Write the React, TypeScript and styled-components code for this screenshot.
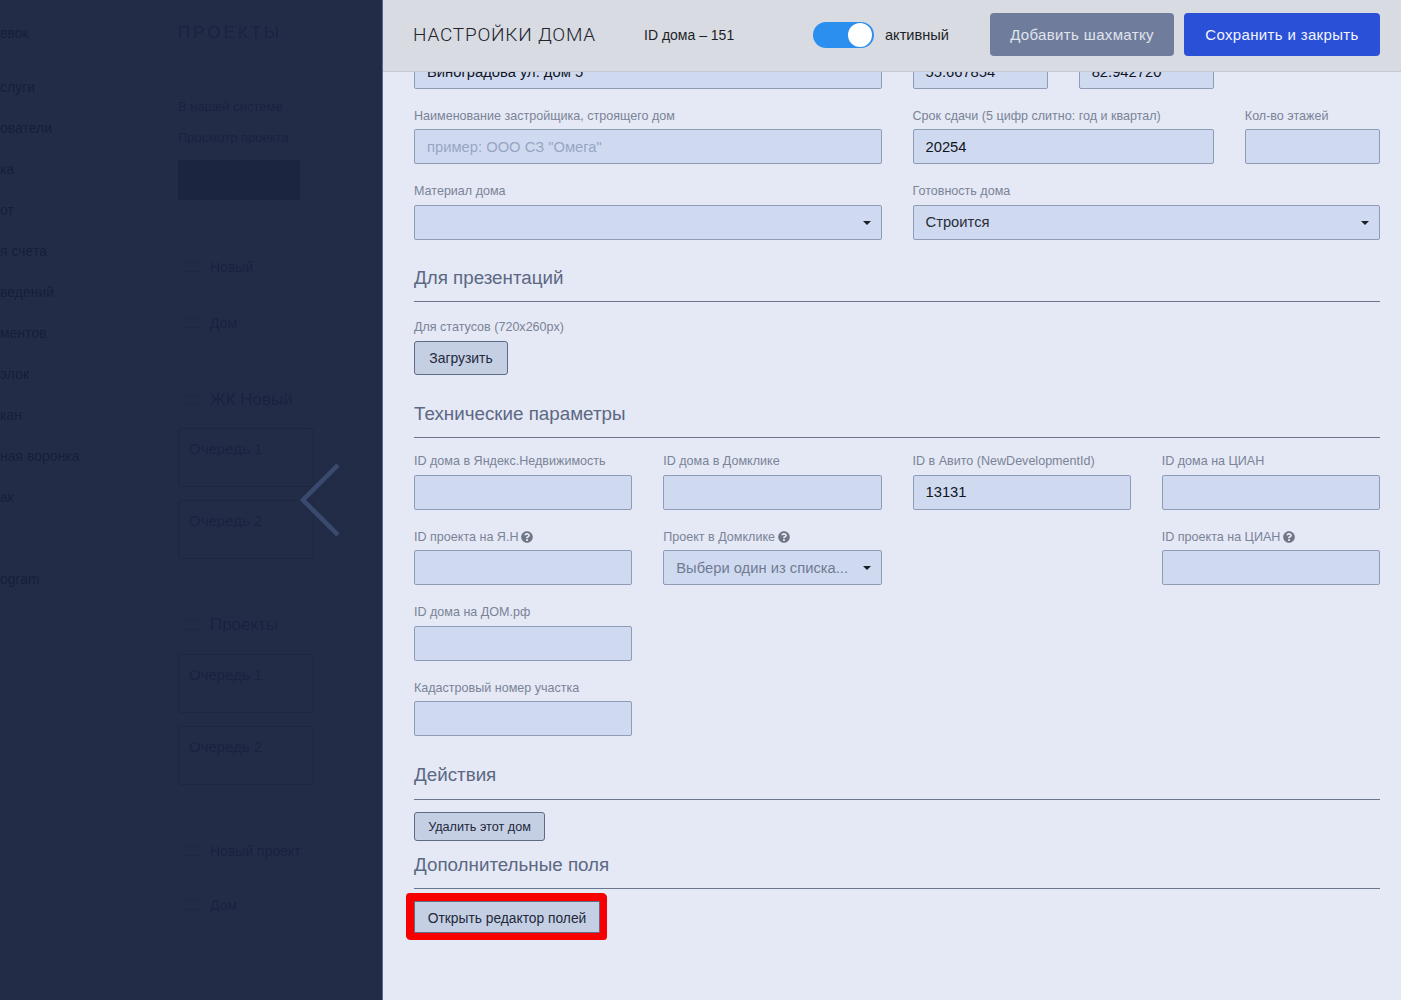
import React from "react";
import styled, { createGlobalStyle } from "styled-components";
import { FaQuestionCircle } from "react-icons/fa";

const Global = createGlobalStyle`
  html, body { margin: 0; padding: 0; height: 100%; overflow: hidden; }
  body { font-family: "Liberation Sans", Arial, sans-serif; background: #e4e9f5; }
  * { box-sizing: border-box; }
`;

const Page = styled.div`
  display: flex;
  width: 100%;
  height: 1000px;
  overflow: hidden;
`;

/* dimmed page behind the panel */
const Backdrop = styled.div`
  position: relative;
  flex: 0 0 383px;
  display: flex;
  height: 100%;
  background: #232c47;
  border-right: 1px solid #5a6a8c;
  overflow: hidden;
`;
const SideMenu = styled.div`
  flex: 0 0 178px;
  padding-top: 25px;
  display: flex;
  flex-direction: column;
  align-items: flex-start;
  filter: blur(0.5px);
`;
const SideItem = styled.div<{ $gap: number }>`
  font-size: 14px;
  line-height: 16px;
  color: #171f36;
  margin-bottom: ${(p) => p.$gap}px;
  white-space: nowrap;
`;
const DimColumn = styled.div`
  flex: 1;
  padding-top: 23px;
  display: flex;
  flex-direction: column;
  align-items: flex-start;
  filter: blur(0.6px);
`;
const DimTitle = styled.div`
  font-size: 17px;
  line-height: 20px;
  letter-spacing: 3px;
  color: #1b2340;
  margin-bottom: 56px;
`;
const DimText = styled.div<{ $gap: number }>`
  font-size: 13px;
  line-height: 16px;
  color: #1a2240;
  margin-bottom: ${(p) => p.$gap}px;
`;
const DimImage = styled.div`
  width: 122px;
  height: 40px;
  background: #1c2540;
  margin-bottom: 58px;
`;
const DimMenu = styled.div<{ $gap: number; $big?: boolean }>`
  display: flex;
  align-items: center;
  gap: 10px;
  margin-left: 6px;
  font-size: ${(p) => (p.$big ? 17 : 14)}px;
  line-height: 18px;
  color: #1a2240;
  margin-bottom: ${(p) => p.$gap}px;
  &::before {
    content: "";
    width: 16px;
    height: 8px;
    border-top: 1px solid #1f2843;
    border-bottom: 1px solid #1f2843;
  }
`;
const DimCard = styled.div<{ $gap: number }>`
  width: 136px;
  height: 59px;
  padding: 11px 10px;
  border: 1px solid #1e2640;
  border-radius: 3px;
  font-size: 15px;
  color: #1a2240;
  margin-bottom: ${(p) => p.$gap}px;
`;
const BackChevron = styled.svg`
  position: absolute;
  left: 298px;
  top: 460px;
`;

/* panel */
const Panel = styled.div`
  flex: 1;
  min-width: 0;
  display: flex;
  flex-direction: column;
  height: 100%;
  background: #e4e9f5;
`;
const Header = styled.header`
  position: relative;
  z-index: 2;
  flex: 0 0 72px;
  display: flex;
  align-items: center;
  padding: 0 21px 2px 30px;
  background: #d8dbe1;
  border-bottom: 1px solid #c4c8d1;
`;
const Title = styled.h1`
  margin: 0;
  width: 231px;
  font-family: Roboto, "Liberation Sans", sans-serif;
  font-weight: 300;
  font-size: 19px;
  letter-spacing: 0.78px;
  color: #20242e;
  white-space: nowrap;
`;
const HouseId = styled.div`
  width: 169px;
  font-size: 14px;
  color: #1c1f27;
`;
const Toggle = styled.div`
  width: 61px;
  height: 26px;
  padding: 1px 2px;
  display: flex;
  justify-content: flex-end;
  border-radius: 13px;
  background: #2b8ff0;
  &::after {
    content: "";
    width: 24px;
    height: 24px;
    border-radius: 50%;
    background: #fff;
  }
`;
const ToggleText = styled.div`
  margin-left: 11px;
  width: 105px;
  font-size: 14.6px;
  color: #1c1f27;
`;
const HeadButton = styled.button<{ $primary?: boolean }>`
  height: 43px;
  width: ${(p) => (p.$primary ? 196 : 184)}px;
  margin-left: ${(p) => (p.$primary ? 10 : 0)}px;
  border: 0;
  border-radius: 4px;
  font-family: "Liberation Sans", sans-serif;
  font-size: 15px;
  letter-spacing: 0.35px;
  color: ${(p) => (p.$primary ? "#f2f5ff" : "#e0e4ee")};
  background: ${(p) => (p.$primary ? "#2b50d8" : "#6f7c9b")};
`;
const Body = styled.div`
  flex: 1;
  min-height: 0;
  overflow: hidden;
`;
const Form = styled.div`
  margin-top: -40px;
  padding: 0 21px 0 31px;
`;
const Grid = styled.div`
  display: grid;
  grid-template-columns: repeat(12, 1fr);
  column-gap: 31px;
  row-gap: 18.4px;
`;
const Field = styled.div<{ $span: number }>`
  grid-column: span ${(p) => p.$span};
  min-width: 0;
`;
const Label = styled.label`
  display: flex;
  align-items: center;
  gap: 3px;
  height: 17px;
  margin-bottom: 5px;
  font-size: 12.55px;
  color: #7b8397;
  white-space: nowrap;
  svg { width: 12px; height: 12px; color: #6f7686; }
`;
const InputBox = styled.div<{ $muted?: boolean }>`
  position: relative;
  height: 35px;
  padding: 0 12px;
  display: flex;
  align-items: center;
  background: #cfdaf1;
  border: 1px solid #8f9cb8;
  border-radius: 2px;
  font-size: 14.75px;
  color: ${(p) => (p.$muted ? "#98a5c1" : "#11141c")};
  white-space: nowrap;
`;
const SelectValue = styled.span<{ $muted?: boolean }>`
  color: ${(p) => (p.$muted ? "#6f7a91" : "#2a2e38")};
`;
const Caret = styled.span`
  position: absolute;
  right: 10px;
  top: 15px;
  border-left: 4px solid transparent;
  border-right: 4px solid transparent;
  border-top: 4px solid #1b1e26;
`;
const Section = styled.div<{ $top: number; $pad?: number }>`
  margin-top: ${(p) => p.$top}px;
  padding-bottom: ${(p) => p.$pad ?? 11}px;
  border-bottom: 1px solid #6b7590;
  font-size: 18.8px;
  line-height: 24px;
  color: #5d6883;
`;
const Block = styled.div<{ $top: number }>`
  margin-top: ${(p) => p.$top}px;
`;
const Button = styled.button<{ $w: number; $h: number; $size: number; $flag?: boolean }>`
  display: block;
  width: ${(p) => p.$w}px;
  height: ${(p) => p.$h}px;
  padding: ${(p) => (p.$flag ? "2px 0 0" : "0")};
  background: #c5cfe4;
  border: 1px solid #5f6b84;
  border-radius: ${(p) => (p.$flag ? 1 : 3)}px;
  font-family: "Liberation Sans", sans-serif;
  font-size: ${(p) => p.$size}px;
  color: #23283a;
  ${(p) => (p.$flag ? "box-shadow: 0 0 0 7px #f60000, -1px -1px 0 7px #f60000;" : "")}
`;

const Help = () => <FaQuestionCircle />;

const sideItems: [string, number][] = [
  ["ввок", 38], ["слуги", 25], ["ователи", 25], ["ка", 25], ["от", 25], ["я счета", 25],
  ["ведений", 25], ["ментов", 25], ["элок", 25], ["кан", 25], ["ная воронка", 25], ["ак", 66], ["ogram", 0],
];

export default function App() {
  return (
    <Page>
      <Global />
      <Backdrop>
        <SideMenu>
          {sideItems.map(([text, gap]) => (
            <SideItem key={text} $gap={gap}>{text}</SideItem>
          ))}
        </SideMenu>
        <DimColumn>
          <DimTitle>ПРОЕКТЫ</DimTitle>
          <DimText $gap={15}>В нашей системе</DimText>
          <DimText $gap={14}>Просмотр проекта</DimText>
          <DimImage />
          <DimMenu $gap={38}>Новый</DimMenu>
          <DimMenu $gap={59}>Дом</DimMenu>
          <DimMenu $gap={19} $big>ЖК Новый</DimMenu>
          <DimCard $gap={13}>Очередь 1</DimCard>
          <DimCard $gap={57}>Очередь 2</DimCard>
          <DimMenu $gap={20} $big>Проекты</DimMenu>
          <DimCard $gap={13}>Очередь 1</DimCard>
          <DimCard $gap={57}>Очередь 2</DimCard>
          <DimMenu $gap={36}>Новый проект</DimMenu>
          <DimMenu $gap={0}>Дом</DimMenu>
        </DimColumn>
        <BackChevron width="46" height="80" viewBox="0 0 46 80">
          <path d="M40 5 L5 40 L40 75" fill="none" stroke="#3a4a6e" strokeWidth="4.5" />
        </BackChevron>
      </Backdrop>
      <Panel>
        <Header>
          <Title>НАСТРОЙКИ ДОМА</Title>
          <HouseId>ID дома – 151</HouseId>
          <Toggle />
          <ToggleText>активный</ToggleText>
          <HeadButton>Добавить шахматку</HeadButton>
          <HeadButton $primary>Сохранить и закрыть</HeadButton>
        </Header>
        <Body>
          <Form>
            <Grid>
              <Field $span={6}><Label>Адрес дома</Label><InputBox>Виноградова ул. дом 5</InputBox></Field>
              <Field $span={2}><Label>Широта</Label><InputBox>55.667854</InputBox></Field>
              <Field $span={2}><Label>Долгота</Label><InputBox>82.942720</InputBox></Field>
              <Field $span={2} />
              <Field $span={6}>
                <Label>Наименование застройщика, строящего дом</Label>
                <InputBox $muted>пример: ООО СЗ "Омега"</InputBox>
              </Field>
              <Field $span={4}>
                <Label>Срок сдачи (5 цифр слитно: год и квартал)</Label>
                <InputBox>20254</InputBox>
              </Field>
              <Field $span={2}><Label>Кол-во этажей</Label><InputBox /></Field>
              <Field $span={6}><Label>Материал дома</Label><InputBox><Caret /></InputBox></Field>
              <Field $span={6}>
                <Label>Готовность дома</Label>
                <InputBox><SelectValue>Строится</SelectValue><Caret /></InputBox>
              </Field>
            </Grid>

            <Section $top={26}>Для презентаций</Section>
            <Block $top={17}>
              <Label>Для статусов (720x260px)</Label>
              <Button $w={94} $h={34} $size={13.9}>Загрузить</Button>
            </Block>

            <Section $top={27}>Технические параметры</Section>
            <Block $top={15.2}>
              <Grid>
                <Field $span={3}><Label>ID дома в Яндекс.Недвижимость</Label><InputBox /></Field>
                <Field $span={3}><Label>ID дома в Домклике</Label><InputBox /></Field>
                <Field $span={3}><Label>ID в Авито (NewDevelopmentId)</Label><InputBox>13131</InputBox></Field>
                <Field $span={3}><Label>ID дома на ЦИАН</Label><InputBox /></Field>
                <Field $span={3}><Label>ID проекта на Я.Н <Help /></Label><InputBox /></Field>
                <Field $span={3}>
                  <Label>Проект в Домклике <Help /></Label>
                  <InputBox><SelectValue $muted>Выбери один из списка...</SelectValue><Caret /></InputBox>
                </Field>
                <Field $span={3} />
                <Field $span={3}><Label>ID проекта на ЦИАН <Help /></Label><InputBox /></Field>
                <Field $span={3}><Label>ID дома на ДОМ.рф</Label><InputBox /></Field>
                <Field $span={9} />
                <Field $span={3}><Label>Кадастровый номер участка</Label><InputBox /></Field>
              </Grid>
            </Block>

            <Section $top={27.3} $pad={12}>Действия</Section>
            <Block $top={12}>
              <Button $w={131} $h={29} $size={12.65}>Удалить этот дом</Button>
            </Block>

            <Section $top={12}>Дополнительные поля</Section>
            <Block $top={12}>
              <Button $w={186} $h={32} $size={13.8} $flag>Открыть редактор полей</Button>
            </Block>
          </Form>
        </Body>
      </Panel>
    </Page>
  );
}
